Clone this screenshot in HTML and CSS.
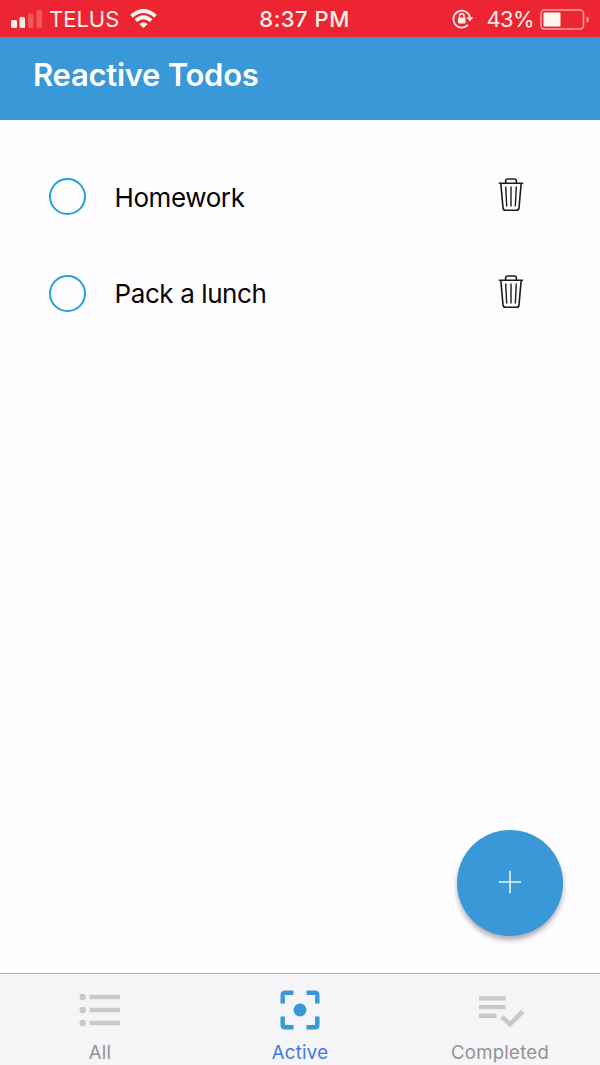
FILE: index.html
```html
<!DOCTYPE html>
<html lang="en">
<head>
<meta charset="utf-8">
<title>Reactive Todos</title>
<link rel="stylesheet" href="styles.css">
</head>
<body>
<div class="app">
  <div class="status">
    <div class="status-left">
      <svg class="signal" width="32" height="18" viewBox="0 0 32 18" fill="#fbeee6">
        <rect x="0" y="10" width="6" height="8" rx="1.5"/>
        <rect x="8.5" y="7" width="5.5" height="11" rx="1.5"/>
        <rect x="17" y="3.5" width="5.5" height="14.5" rx="1.5" opacity=".25"/>
        <rect x="25.5" y="0" width="5.5" height="18" rx="1.5" opacity=".25"/>
      </svg>
      <span class="carrier">TELUS</span>
      <svg class="wifi" width="27" height="20" viewBox="0 0 27 20" fill="none" stroke="#fff5ef" stroke-width="3.8">
        <path d="M1.5 7.2Q13.5 -3.2 25.5 7.2"/>
        <path d="M5.8 11.7Q13.5 4.9 21.2 11.7"/>
        <path d="M13.5 19L9.3 15Q13.5 11.6 17.7 15Z" fill="#fff5ef" stroke="none"/>
      </svg>
    </div>
    <span class="time">8:37 PM</span>
    <div class="status-right">
      <svg class="lock" width="22" height="20" viewBox="0 0 22 20" fill="none" stroke="#fdeee8">
        <path d="M16 15.8A8.4 8.4 0 1 1 17.9 8" stroke-width="1.8"/>
        <path d="M14.3 8.2H21.2L17.8 12.4Z" fill="#fdeee8" stroke="none"/>
        <rect x="6" y="8.6" width="7.6" height="5.8" rx=".8" fill="#fdeee8" stroke="none"/>
        <path d="M7.5 9.5V7a2.3 2.3 0 0 1 4.6 0V9.5" stroke-width="1.4"/>
      </svg>
      <span class="percent">43%</span>
      <svg class="battery" width="50" height="22" viewBox="0 0 50 22">
        <rect x="1" y="1" width="42.5" height="19" rx="3.5" fill="none" stroke="#f8a3a0" stroke-width="1.6"/>
        <rect x="3.5" y="3.5" width="17" height="14" rx=".8" fill="#fff8f0"/>
        <path d="M46.5 7.5Q49 8 49 10.5T46.5 13.5Z" fill="#f8a3a0"/>
      </svg>
    </div>
  </div>
  <header class="header"><h1 class="title">Reactive Todos</h1></header>
  <main class="list">
    <div class="todo">
      <span class="check"></span>
      <span class="todo-text">Homework</span>
      <svg class="trash" width="26" height="35" viewBox="0 0 26 35" fill="none" stroke="#1c1c1e" stroke-width="1.6">
        <path d="M.8 6.2H25.2M7.6 6V4.2Q7.6 2 9.8 2H16.2Q18.4 2 18.4 4.2V6M2.8 6.2L5 30.8Q5.3 33.3 7.5 33.3H18.5Q20.7 33.3 21 30.8L23.2 6.2"/>
        <path d="M7.7 9.5L8.7 29.5M13 9.5V29.5M18.3 9.5L17.3 29.5" stroke-width="1.4"/>
      </svg>
    </div>
    <div class="todo">
      <span class="check"></span>
      <span class="todo-text">Pack a lunch</span>
      <svg class="trash" width="26" height="35" viewBox="0 0 26 35" fill="none" stroke="#1c1c1e" stroke-width="1.6">
        <path d="M.8 6.2H25.2M7.6 6V4.2Q7.6 2 9.8 2H16.2Q18.4 2 18.4 4.2V6M2.8 6.2L5 30.8Q5.3 33.3 7.5 33.3H18.5Q20.7 33.3 21 30.8L23.2 6.2"/>
        <path d="M7.7 9.5L8.7 29.5M13 9.5V29.5M18.3 9.5L17.3 29.5" stroke-width="1.4"/>
      </svg>
    </div>
    <button class="fab" aria-label="Add">
      <svg width="24" height="24" viewBox="0 0 24 24" stroke="#e4fbff" stroke-width="1.5"><path d="M12 .8V23.2M.8 12H23.2"/></svg>
    </button>
  </main>
  <nav class="tabs">
    <div class="tab">
      <svg width="44" height="44" viewBox="0 0 44 44" fill="#c9c9cc">
        <circle cx="4.7" cy="9" r="3.2"/><circle cx="4.7" cy="22" r="3.2"/><circle cx="4.7" cy="35" r="3.2"/>
        <path d="M11.5 6.7H42V11.2H11.5ZM11.5 19.7H42V24.2H11.5ZM11.5 32.7H42V37.2H11.5Z"/>
      </svg>
      <span class="label">All</span>
    </div>
    <div class="tab active">
      <svg width="44" height="44" viewBox="0 0 44 44" fill="none" stroke="#3898d8" stroke-width="4.4">
        <path d="M4.7 15.5V7Q4.7 4.7 7 4.7H15.5M28.5 4.7H37Q39.3 4.7 39.3 7V15.5M39.3 28.5V37Q39.3 39.3 37 39.3H28.5M15.5 39.3H7Q4.7 39.3 4.7 37V28.5"/>
        <circle cx="22" cy="22" r="6.5" fill="#3898d8" stroke="none"/>
      </svg>
      <span class="label">Active</span>
    </div>
    <div class="tab">
      <svg width="50" height="44" viewBox="0 0 50 44" fill="#c9c9cc">
        <path d="M4 8.2H30.5V12.6H4ZM4 16.9H30.5V21.3H4ZM4 25.6H21.5V30H4Z"/>
        <path d="M26.7 28.5L35 36.3L47.8 23.5" fill="none" stroke="#c9c9cc" stroke-width="4.6"/>
      </svg>
      <span class="label">Completed</span>
    </div>
  </nav>
</div>
</body>
</html>
```
FILE: styles.css
```css
* { box-sizing: border-box; }
body { margin: 0; font-family: Inter, "Liberation Sans", sans-serif; background: #fefdff; }
.app { width: 600px; height: 1065px; display: flex; flex-direction: column; overflow: hidden; }
.status { height: 37px; flex: none; background: #ed2432; color: #fff1ea; font-size: 22px; line-height: 38px; display: grid; grid-template-columns: 1fr auto 1fr; }
.status-left { display: flex; align-items: center; padding-left: 11px; }
.carrier { margin-left: 6px; width: 81px; }
.time { font-weight: 500; font-size: 22px; letter-spacing: .5px; margin-left: 9px; }
.status-right { display: flex; align-items: center; justify-content: flex-end; padding-right: 10px; }
.percent { margin: 0 6px 0 12px; letter-spacing: -.6px; }
.battery { margin-top: 2px; }
.header { height: 82.5px; flex: none; background: #3898d8; padding: 0 33px; }
.title { margin: 0; color: #fff; font-size: 31px; font-weight: 600; line-height: 75px; letter-spacing: -.27px; }
.list { flex: 1; position: relative; padding-top: 29px; }
.todo { height: 96.5px; display: flex; align-items: center; padding: 0 76px 0 49px; }
.check { width: 37px; height: 37px; border: 2px solid #24a0dc; border-radius: 50%; }
.todo-text { flex: 1; margin-left: 28.5px; padding-top: 1px; font-size: 26px; letter-spacing: -.4px; color: #050505; }
.trash { margin-top: -4px; }
.fab { position: absolute; right: 37px; bottom: 37px; width: 106px; height: 106px; border: 0; border-radius: 50%; background: #3898d8; box-shadow: 0 4px 5px rgba(60,45,50,.38); display: flex; align-items: center; justify-content: center; padding: 0 0 3px; }
.tabs { height: 92px; flex: none; border-top: 1px solid #aeb0b4; background: #f5f4f7; display: grid; grid-template-columns: repeat(3, 1fr); }
.tab { display: flex; flex-direction: column; align-items: center; padding-top: 14px; color: #929294; }
.tab svg { flex: none; }
.label { font-size: 18.5px; line-height: 24px; margin-top: 8px; letter-spacing: .3px; }
.active { color: #4077df; }
```
